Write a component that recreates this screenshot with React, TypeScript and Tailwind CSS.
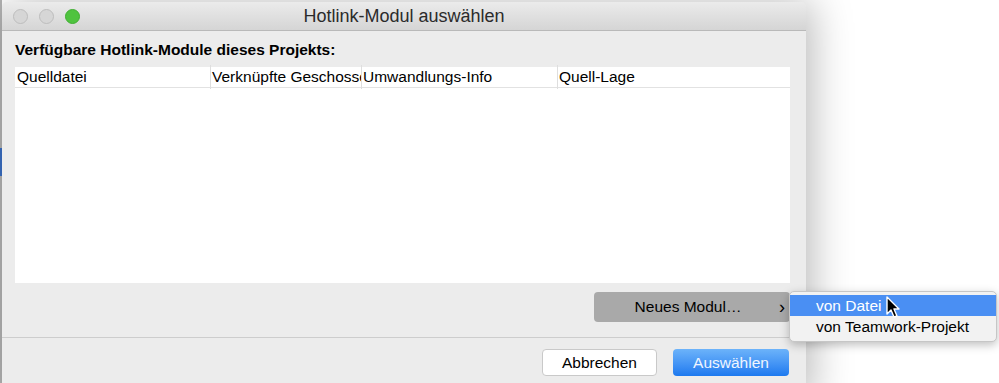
import React from 'react'

const font = { fontFamily: '"Liberation Sans", Arial, sans-serif' }

const TrafficLight = ({ color, border }: { color: string; border: string }) => (
  <span className={`block h-[15px] w-[15px] rounded-full border ${color} ${border}`} />
)

const Cursor = () => (
  <svg width="18" height="24" viewBox="0 0 18 24" className="absolute left-[886px] top-[296px]">
    <path d="M1 1 L1 18 L5 14 L8 21 L11 20 L8 13 L13 13 Z" fill="#000" stroke="#fff" strokeWidth="1.4" strokeLinejoin="round" />
  </svg>
)

const columns = [
  { label: 'Quelldatei', width: 'w-[195px]' },
  { label: 'Verknüpfte Geschosse', width: 'w-[151px]' },
  { label: 'Umwandlungs-Info', width: 'w-[196px]' },
  { label: 'Quell-Lage', width: 'flex-1' },
]

export default function App() {
  return (
    <div className="relative flex h-[383px] w-[999px] overflow-hidden bg-white text-black" style={font}>
      {/* desktop strip on the left */}
      <div className="flex w-[2px] flex-col bg-[#b4b4b4]">
        <div className="mt-[148px] h-[28px] bg-[#3a6fc4]" />
      </div>

      {/* dialog window */}
      <div className="mt-[2px] flex h-[400px] w-[804px] flex-col rounded-t-[5px] bg-[#ececec] shadow-[6px_0_40px_rgba(0,0,0,0.28)]">
        <div className="relative flex h-[29px] items-center rounded-t-[5px] border-b border-[#b9b9b9] bg-gradient-to-b from-[#ebebeb] to-[#d5d5d5]">
          <div className="absolute left-[11px] flex gap-[11px]">
            <TrafficLight color="bg-[#d6d6d6]" border="border-[#bdbdbd]" />
            <TrafficLight color="bg-[#d6d6d6]" border="border-[#bdbdbd]" />
            <TrafficLight color="bg-[#4fc33f]" border="border-[#3fae31]" />
          </div>
          <div className="w-full text-center text-[18px] text-[#2b2b2b]">Hotlink-Modul auswählen</div>
        </div>

        <div className="flex flex-col pl-[13px] pr-[16px]">
          <div className="pt-[8px] text-[15.5px] font-bold leading-[21px]">Verfügbare Hotlink-Module dieses Projekts:</div>

          <div className="mt-[7px] flex h-[216px] flex-col bg-white">
            <div className="flex h-[21px] items-center border-b border-[#e2e2e2] text-[15.5px]">
              {columns.map((c, i) => (
                <div
                  key={c.label}
                  className={`${c.width} overflow-hidden whitespace-nowrap ${i > 0 ? 'border-l border-[#dedede] pl-[1px]' : 'pl-[2px]'}`}
                >
                  {c.label}
                </div>
              ))}
            </div>
          </div>

          <div className="mt-[9px] flex justify-end">
            <div className="relative flex h-[30px] w-[196px] items-center justify-center rounded-[4px] bg-[#a9a9a9] text-[15.5px]">
              <span className="-ml-[8px]">Neues Modul…</span>
              <span className="absolute right-[5px] text-[18px] leading-none">›</span>
            </div>
          </div>
        </div>

        <div className="mt-[15px] border-t border-[#cdcdcd]" />

        <div className="mt-[11px] flex justify-end gap-[16px] pr-[17px]">
          <div className="flex h-[27px] w-[115px] items-center justify-center rounded-[4px] border border-[#c9c9c9] bg-white text-[15.5px]">
            Abbrechen
          </div>
          <div className="flex h-[27px] w-[116px] items-center justify-center rounded-[4px] bg-gradient-to-b from-[#6cb3fa] to-[#1c79ef] text-[15.5px] text-[#eef5ff]">
            Auswählen
          </div>
        </div>
      </div>

      {/* popup menu */}
      <div className="absolute left-[789px] top-[291px] flex w-[208px] flex-col rounded-[5px] border border-[#c6c6c6] bg-[#f2f2f2] py-[3px] text-[15.5px] shadow-[0_3px_10px_rgba(0,0,0,0.25)]">
        <div className="flex h-[21px] items-center bg-[#4a8ff3] pl-[26px] text-white">von Datei</div>
        <div className="flex h-[22px] items-center pl-[26px]">von Teamwork-Projekt</div>
      </div>

      <Cursor />
    </div>
  )
}
